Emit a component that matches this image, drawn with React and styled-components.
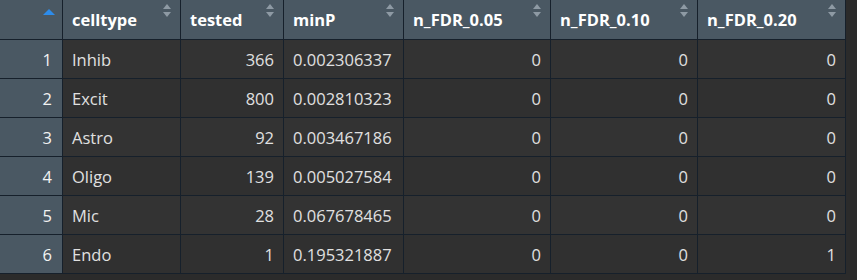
import React from 'react'
import styled, { createGlobalStyle } from 'styled-components'

const GlobalStyle = createGlobalStyle`
  html, body {
    margin: 0;
    padding: 0;
    background-color: #2b2b2b;
  }
  body {
    font-family: 'Open Sans', 'Noto Sans', 'Liberation Sans', sans-serif;
  }
`

const columns = [
  { key: 'celltype', label: 'celltype', width: 117, align: 'left' },
  { key: 'tested', label: 'tested', width: 102, align: 'right' },
  { key: 'minP', label: 'minP', width: 119, align: 'left' },
  { key: 'f05', label: 'n_FDR_0.05', width: 146, align: 'right' },
  { key: 'f10', label: 'n_FDR_0.10', width: 146, align: 'right' },
  { key: 'f20', label: 'n_FDR_0.20', width: 147, align: 'right' },
]

const rows = [
  { celltype: 'Inhib', tested: 366, minP: '0.002306337', f05: 0, f10: 0, f20: 0 },
  { celltype: 'Excit', tested: 800, minP: '0.002810323', f05: 0, f10: 0, f20: 0 },
  { celltype: 'Astro', tested: 92, minP: '0.003467186', f05: 0, f10: 0, f20: 0 },
  { celltype: 'Oligo', tested: 139, minP: '0.005027584', f05: 0, f10: 0, f20: 0 },
  { celltype: 'Mic', tested: 28, minP: '0.067678465', f05: 0, f10: 0, f20: 0 },
  { celltype: 'Endo', tested: 1, minP: '0.195321887', f05: 0, f10: 0, f20: 1 },
]

const Grid = styled.div`
  display: inline-grid;
  grid-template-columns: 62px ${columns.map(c => c.width + 'px').join(' ')};
  grid-template-rows: 39px repeat(${rows.length}, 38px);
  gap: 1px;
  padding: 0 1px 1px 0;
  background-color: #16202b;
`

const HeadCell = styled.div`
  position: relative;
  background-color: #4a5863;
  color: #ffffff;
  font-weight: 700;
  font-size: 16.5px;
  display: flex;
  align-items: center;
  padding: 0 22px 0 9px;
  white-space: nowrap;
`

const RowNumHead = styled.div`
  position: relative;
  background-color: #4a5863;
`

const SortAsc = styled.span`
  position: absolute;
  right: 7px;
  top: 9px;
  width: 0;
  height: 0;
  border-left: 6px solid transparent;
  border-right: 6px solid transparent;
  border-bottom: 6px solid #2d8ceb;
`

const SortIcon = styled.span`
  position: absolute;
  right: 9px;
  top: 4px;
  display: flex;
  flex-direction: column;
  gap: 3px;
  &::before, &::after {
    content: '';
    width: 0;
    height: 0;
    border-left: 4.5px solid transparent;
    border-right: 4.5px solid transparent;
  }
  &::before {
    border-bottom: 5px solid #8e9aa4;
  }
  &::after {
    border-top: 5px solid #8e9aa4;
  }
`

const RowNum = styled.div`
  background-color: #4a5863;
  color: #f2f2f2;
  font-size: 16.5px;
  display: flex;
  align-items: center;
  justify-content: flex-end;
  padding-right: 10px;
`

const Cell = styled.div`
  background-color: ${p => (p.$odd ? '#333333' : '#303030')};
  color: #e0e0e0;
  font-size: 16.5px;
  display: flex;
  align-items: center;
  justify-content: ${p => (p.$align === 'right' ? 'flex-end' : 'flex-start')};
  padding: 0 9px;
  white-space: nowrap;
`

export default function App() {
  return (
    <>
      <GlobalStyle />
      <Grid>
        <RowNumHead>
          <SortAsc />
        </RowNumHead>
        {columns.map(c => (
          <HeadCell key={c.key}>
            {c.label}
            <SortIcon />
          </HeadCell>
        ))}
        {rows.map((r, i) => (
          <React.Fragment key={i}>
            <RowNum>{i + 1}</RowNum>
            {columns.map(c => (
              <Cell key={c.key} $align={c.align} $odd={i % 2 === 0}>
                {r[c.key]}
              </Cell>
            ))}
          </React.Fragment>
        ))}
      </Grid>
    </>
  )
}
